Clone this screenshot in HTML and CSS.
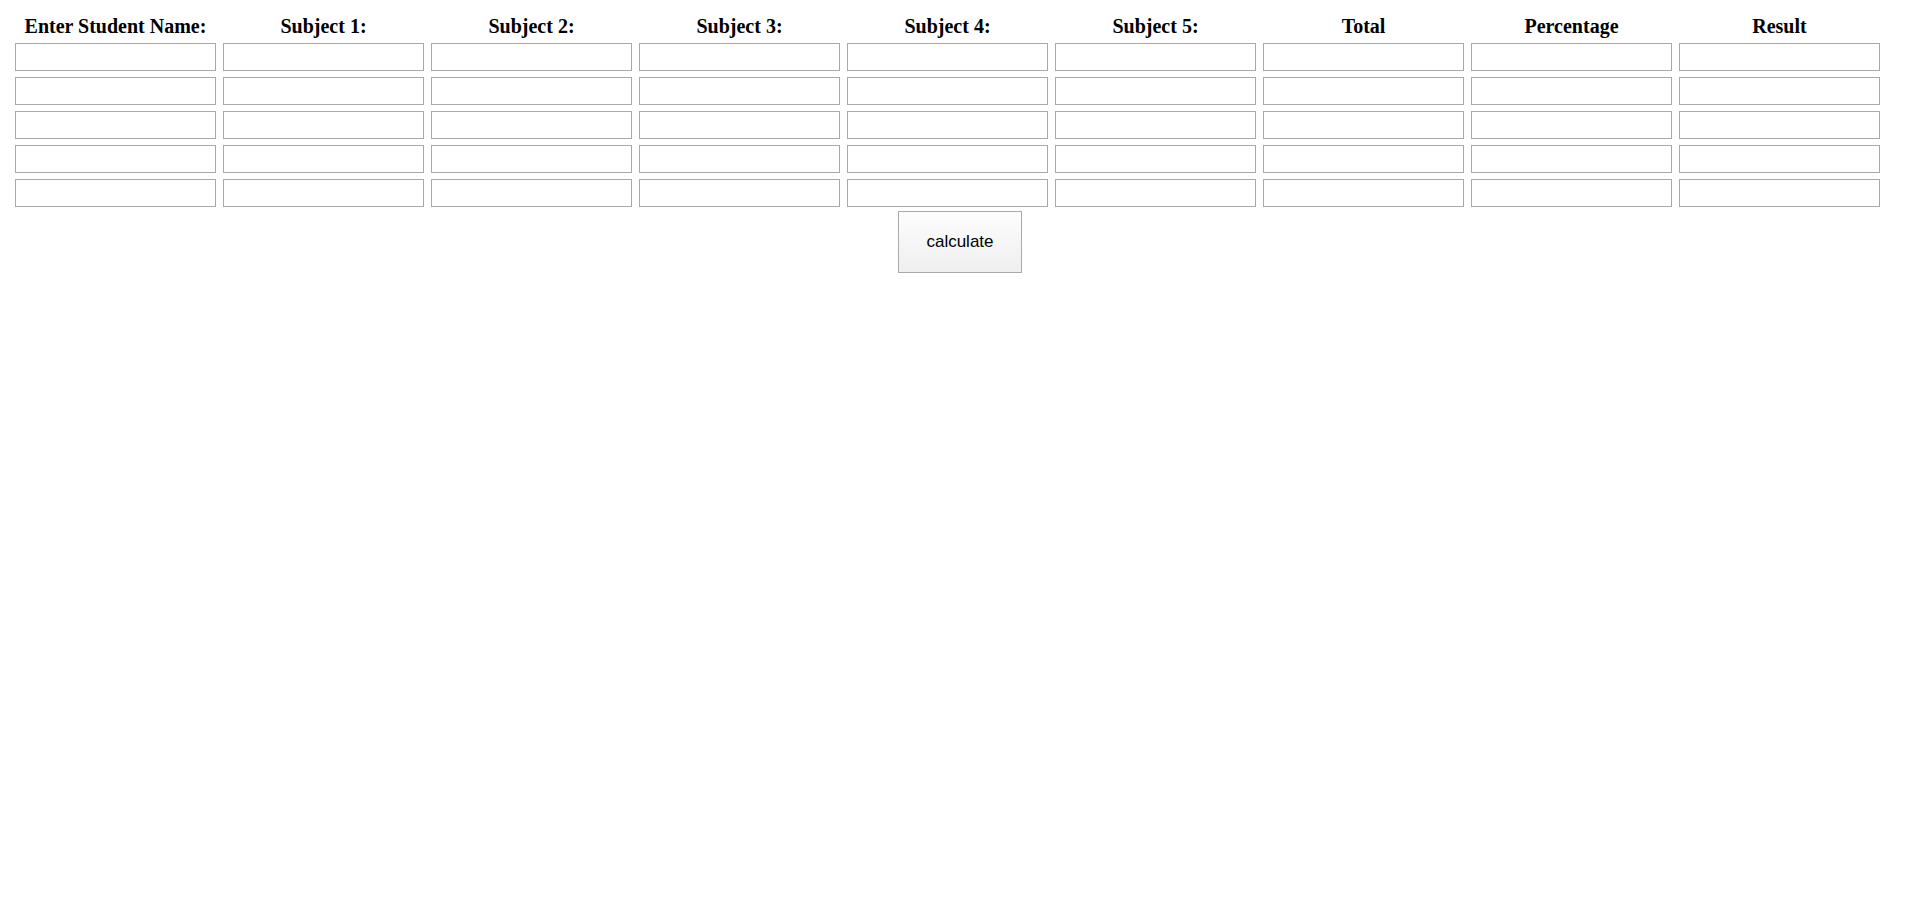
FILE: index.html
```html
<!DOCTYPE html>
<html>
<head>
<meta charset="utf-8">
<link rel="stylesheet" href="styles.css">
</head>
<body>
<div class="sheet">
  <div class="head">Enter Student Name:</div>
  <div class="head">Subject 1:</div>
  <div class="head">Subject 2:</div>
  <div class="head">Subject 3:</div>
  <div class="head">Subject 4:</div>
  <div class="head">Subject 5:</div>
  <div class="head">Total</div>
  <div class="head">Percentage</div>
  <div class="head">Result</div>

  <input class="field" type="text"><input class="field" type="text"><input class="field" type="text"><input class="field" type="text"><input class="field" type="text"><input class="field" type="text"><input class="field" type="text"><input class="field" type="text"><input class="field" type="text">
  <input class="field" type="text"><input class="field" type="text"><input class="field" type="text"><input class="field" type="text"><input class="field" type="text"><input class="field" type="text"><input class="field" type="text"><input class="field" type="text"><input class="field" type="text">
  <input class="field" type="text"><input class="field" type="text"><input class="field" type="text"><input class="field" type="text"><input class="field" type="text"><input class="field" type="text"><input class="field" type="text"><input class="field" type="text"><input class="field" type="text">
  <input class="field" type="text"><input class="field" type="text"><input class="field" type="text"><input class="field" type="text"><input class="field" type="text"><input class="field" type="text"><input class="field" type="text"><input class="field" type="text"><input class="field" type="text">
  <input class="field" type="text"><input class="field" type="text"><input class="field" type="text"><input class="field" type="text"><input class="field" type="text"><input class="field" type="text"><input class="field" type="text"><input class="field" type="text"><input class="field" type="text">
</div>
<div class="actions">
  <button class="calc" type="button">calculate</button>
</div>
</body>
</html>
```

FILE: styles.css
```css
html, body {
  margin: 0;
  padding: 0;
  background: #ffffff;
}
body {
  font-family: "Liberation Serif", "Times New Roman", serif;
  color: #000;
}
.sheet {
  display: grid;
  grid-template-columns: repeat(9, 201px);
  column-gap: 7px;
  row-gap: 6px;
  padding: 14px 0 0 15px;
}
.head {
  font-weight: bold;
  font-size: 20px;
  line-height: 22px;
  padding-top: 1px;
  text-align: center;
  white-space: nowrap;
}
.field {
  box-sizing: border-box;
  width: 201px;
  height: 28px;
  margin: 0;
  border: 1px solid #a9a9a9;
  background: #fff;
  padding: 0 4px;
  font-family: "Liberation Sans", Arial, sans-serif;
  font-size: 13px;
  outline: none;
}
.actions {
  display: flex;
  justify-content: center;
  padding-top: 4px;
}
.calc {
  box-sizing: border-box;
  width: 124px;
  height: 62px;
  border: 1px solid #a9a9a9;
  border-radius: 0;
  background: linear-gradient(#fdfdfd, #efefef);
  font-family: "Liberation Sans", Arial, sans-serif;
  font-size: 17px;
  color: #000;
  padding: 0;
}
```
